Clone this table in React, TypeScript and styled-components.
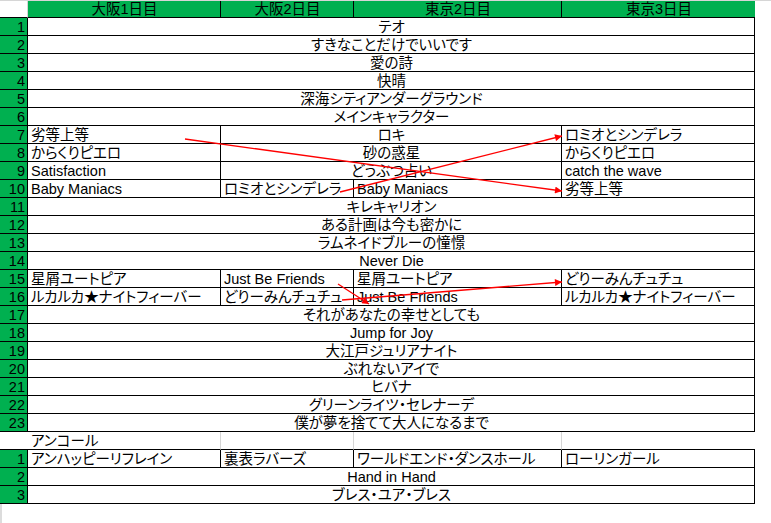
import React from 'react'
import styled, { createGlobalStyle, css } from 'styled-components'

type Kind = 'corner' | 'head' | 'num' | 'body' | 'soft' | 'blank'

interface CellDef {
    text: string
    span?: number
    center?: boolean
}

interface RowDef {
    num: string
    cells: CellDef[]
    soft?: boolean
}

const GlobalStyle = createGlobalStyle`
    html, body {
        margin: 0;
        padding: 0;
        background: #fff;
    }
    body {
        font-family: "Liberation Sans", "Noto Sans CJK JP", sans-serif;
    }
`

const GREEN = '#00b050'

const Page = styled.div`
    position: relative;
    width: 771px;
    height: 523px;
    border-top: 1px solid #d6d6d6;
    box-sizing: border-box;
    display: flex;
    flex-direction: column;
`

const Sheet = styled.div`
    display: grid;
    grid-template-columns: 28px 193px 133px 208px 193px;
    grid-template-rows: 17px;
    grid-auto-rows: 18px;
    width: 755px;
`

const Filler = styled.div`
    flex: 1;
    width: 0;
    border-left: 2px solid #dcdcdc;
`

const Cell = styled.div<{ $kind: Kind; $span: number; $center: boolean; $last?: boolean }>`
    grid-column: span ${p => p.$span};
    box-sizing: border-box;
    display: flex;
    align-items: center;
    justify-content: ${p => (p.$center ? 'center' : 'flex-start')};
    padding: 2px 2px 0 3px;
    white-space: nowrap;
    font-family: "Liberation Sans", "Noto Sans CJK JP", sans-serif;
    font-size: 14.5px;
    line-height: 15px;
    font-feature-settings: "palt";
    color: #000;
    background: #fff;
    border-bottom: 1px solid #000;
    border-right: 1px solid #000;

    ${p => p.$kind === 'corner' && css`
        border-right: 1px solid #d6d6d6;
    `}
    ${p => p.$kind === 'head' && css`
        background: ${GREEN};
        padding-top: 1px;
        border-right: ${p.$last ? 'none' : '1px solid #000'};
    `}
    ${p => p.$kind === 'num' && css`
        background: ${GREEN};
        justify-content: flex-end;
        padding: 2px 2px 0 0;
        font-feature-settings: normal;
    `}
    ${p => p.$kind === 'blank' && css`
        border-right: none;
    `}
    ${p => p.$kind === 'soft' && css`
        border-right: ${p.$last ? 'none' : '1px solid #d6d6d6'};
    `}
`

const Overlay = styled.svg`
    position: absolute;
    left: 0;
    top: 0;
    pointer-events: none;
`

const full = (text: string): CellDef[] => [{ text, span: 4, center: true }]

const rows: RowDef[] = [
    { num: '1', cells: full('テオ') },
    { num: '2', cells: full('すきなことだけでいいです') },
    { num: '3', cells: full('愛の詩') },
    { num: '4', cells: full('快晴') },
    { num: '5', cells: full('深海シティアンダーグラウンド') },
    { num: '6', cells: full('メインキャラクター') },
    { num: '7', cells: [{ text: '劣等上等' }, { text: 'ロキ', span: 2, center: true }, { text: 'ロミオとシンデレラ' }] },
    { num: '8', cells: [{ text: 'からくりピエロ' }, { text: '砂の惑星', span: 2, center: true }, { text: 'からくりピエロ' }] },
    { num: '9', cells: [{ text: 'Satisfaction' }, { text: 'どうぶつ占い', span: 2, center: true }, { text: 'catch the wave' }] },
    { num: '10', cells: [{ text: 'Baby Maniacs' }, { text: 'ロミオとシンデレラ' }, { text: 'Baby Maniacs' }, { text: '劣等上等' }] },
    { num: '11', cells: full('キレキャリオン') },
    { num: '12', cells: full('ある計画は今も密かに') },
    { num: '13', cells: full('ラムネイドブルーの憧憬') },
    { num: '14', cells: full('Never Die') },
    { num: '15', cells: [{ text: '星屑ユートピア' }, { text: 'Just Be Friends' }, { text: '星屑ユートピア' }, { text: 'どりーみんチュチュ' }] },
    { num: '16', cells: [{ text: 'ルカルカ★ナイトフィーバー' }, { text: 'どりーみんチュチュ' }, { text: 'Just Be Friends' }, { text: 'ルカルカ★ナイトフィーバー' }] },
    { num: '17', cells: full('それがあなたの幸せとしても') },
    { num: '18', cells: full('Jump for Joy') },
    { num: '19', cells: full('大江戸ジュリアナイト') },
    { num: '20', cells: full('ぶれないアイで') },
    { num: '21', cells: full('ヒバナ') },
    { num: '22', cells: full('グリーンライツ・セレナーデ') },
    { num: '23', cells: full('僕が夢を捨てて大人になるまで') },
    { num: '', soft: true, cells: [{ text: 'アンコール' }, { text: '' }, { text: '' }, { text: '' }] },
    { num: '1', cells: [{ text: 'アンハッピーリフレイン' }, { text: '裏表ラバーズ' }, { text: 'ワールドエンド・ダンスホール' }, { text: 'ローリンガール' }] },
    { num: '2', cells: full('Hand in Hand') },
    { num: '3', cells: full('ブレス・ユア・ブレス') }
]

const headers = ['大阪1日目', '大阪2日目', '東京2日目', '東京3日目']

// swaps between the two nights, drawn on top of the sheet
const arrows = [
    { x1: 185, y1: 138, x2: 562, y2: 190 },
    { x1: 340, y1: 191, x2: 562, y2: 135 },
    { x1: 338, y1: 283, x2: 369, y2: 303 },
    { x1: 342, y1: 299, x2: 562, y2: 281 }
]

const App: React.FC = () => {
    return (
        <>
            <GlobalStyle />
            <Page>
                <Sheet>
                    <Cell $kind='corner' $span={1} $center={false} />
                    {headers.map((h, i) => (
                        <Cell key={h} $kind='head' $span={1} $center={true} $last={i === headers.length - 1}>{h}</Cell>
                    ))}
                    {rows.map((row, r) => (
                        <React.Fragment key={r}>
                            <Cell $kind={row.soft ? 'blank' : 'num'} $span={1} $center={false}>{row.num}</Cell>
                            {row.cells.map((c, i) => (
                                <Cell
                                    key={i}
                                    $kind={row.soft ? 'soft' : 'body'}
                                    $span={c.span || 1}
                                    $center={!!c.center}
                                    $last={i === row.cells.length - 1}
                                >
                                    {c.text}
                                </Cell>
                            ))}
                        </React.Fragment>
                    ))}
                </Sheet>
                <Filler />
                <Overlay width={771} height={523} viewBox='0 0 771 523'>
                    <defs>
                        <marker id='head' viewBox='0 0 10 10' refX='10' refY='5' markerWidth='9' markerHeight='7' markerUnits='userSpaceOnUse' orient='auto'>
                            <path d='M0 0 L10 5 L0 10 z' fill='#ff0000' />
                        </marker>
                    </defs>
                    {arrows.map((a, i) => (
                        <line key={i} x1={a.x1} y1={a.y1} x2={a.x2} y2={a.y2} stroke='#ff0000' strokeWidth={1.3} markerEnd='url(#head)' />
                    ))}
                </Overlay>
            </Page>
        </>
    )
}

export default App
